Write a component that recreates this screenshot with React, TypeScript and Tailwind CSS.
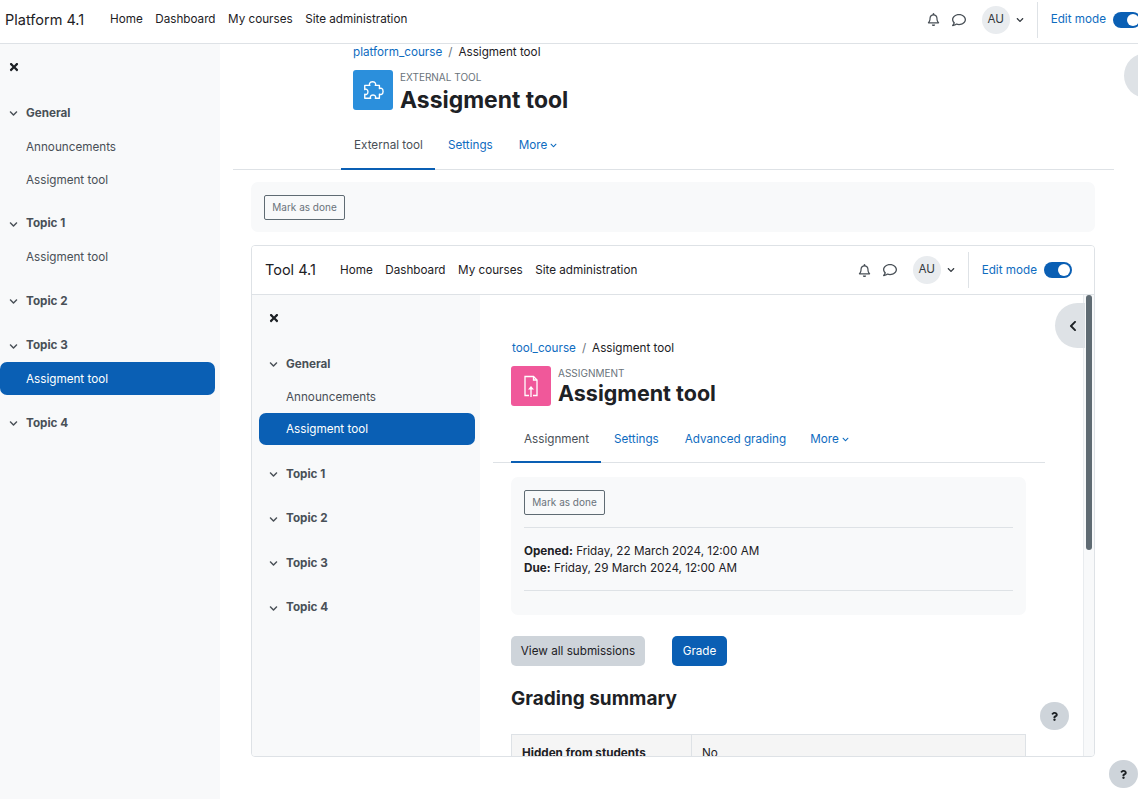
import { FaChevronDown, FaChevronLeft, FaQuestion, FaRegBell, FaRegComment, FaTimes } from 'react-icons/fa';

type Section = { title: string; items: string[] };

function TopBar({ brand, small }: { brand: string; small?: boolean }) {
  return (
    <header className={`flex items-center bg-white shrink-0 border-b border-[#dee2e6] ${small ? 'h-[49px] pl-[13px]' : 'h-[44px] pl-[5px] pb-[4px]'}`}>
      <span className={`text-[14.5px] text-[#1d2125] ${small ? 'w-[75px]' : 'w-[105px]'}`}>{brand}</span>
      <nav className="flex gap-[12.5px] mt-[1px] text-[11.7px] text-[#1d2125]">
        <span>Home</span>
        <span>Dashboard</span>
        <span>My courses</span>
        <span>Site administration</span>
      </nav>
      <div className={`ml-auto flex items-center h-full ${small ? 'pr-[22px]' : ''}`}>
        <FaRegBell size={13} className="text-[#495057]" />
        <FaRegComment size={14} className="ml-[12px] text-[#495057]" />
        <span className="ml-[16px] w-[28px] h-[28px] rounded-full bg-[#e9ecef] flex items-center justify-center text-[11.7px] text-[#343a40]">AU</span>
        <FaChevronDown size={8} className="ml-[6px] text-[#343a40]" />
        <span className="ml-[13px] w-px h-[36px] bg-[#dee2e6]" />
        <span className="ml-[13px] mt-[1px] text-[11.7px] text-[#0f6cbf]">Edit mode</span>
        <span className={`ml-[7px] h-[16px] w-[28px] shrink-0 rounded-full bg-[#0a5fb4] flex items-center justify-end pr-[2px] ${small ? '' : '-mr-[3px]'}`}>
          <span className="w-[12px] h-[12px] rounded-full bg-white" />
        </span>
      </div>
    </header>
  );
}

function CourseIndex({ sections, active, width, pad, itemPad, itemH, activeClass }: { sections: Section[]; active: [number, number]; width: string; pad: string; itemPad: string; itemH: string; activeClass: string }) {
  return (
    <aside className={`${width} shrink-0 bg-[#f8f9fa] h-full overflow-hidden`}>
      <div className={`h-[46px] mb-[6px] flex items-center ${pad}`}>
        <FaTimes size={12} className="text-[#1d2125]" />
      </div>
      <div className="flex flex-col gap-[10.5px]">
        {sections.map((s, i) => (
          <div key={s.title}>
            <div className={`h-[34px] pt-[1px] flex items-center font-bold text-[11.7px] text-[#495057] ${pad}`}>
              <FaChevronDown size={9} className="ml-[1px] mr-[8px]" />
              {s.title}
            </div>
            {s.items.map((item, j) =>
              active[0] === i && active[1] === j ? (
                <div key={item} className={`flex items-center rounded-[7px] bg-[#0a5fb4] text-white text-[11.7px] ${itemH} ${activeClass}`}>
                  {item}
                </div>
              ) : (
                <div key={item} className={`flex items-center pt-[2px] text-[11.7px] text-[#495057] ${itemH} ${itemPad}`}>
                  {item}
                </div>
              )
            )}
          </div>
        ))}
      </div>
    </aside>
  );
}

function PageHead({ course, kind, color, icon, titleClass, rowClass }: { course: string; kind: string; color: string; icon: React.ReactNode; titleClass: string; rowClass: string }) {
  return (
    <div>
      <div className="h-[16px] pt-[1px] flex items-center text-[11.7px] text-[#1d2125]">
        <span className="text-[#0f6cbf]">{course}</span>
        <span className="mx-[6px] text-[#6a737b]">/</span>
        <span>Assigment tool</span>
      </div>
      <div className={`mt-[10px] flex items-start ${rowClass}`}>
        <span className={`w-[40px] h-[40px] rounded-[3px] flex items-center justify-center text-white ${color}`}>{icon}</span>
        <div className="ml-[7px]">
          <div className="text-[10px] leading-[12px] mt-[1px] text-[#6a737b] uppercase">{kind}</div>
          <div className={`leading-[28px] font-bold text-[#1d2125] ${titleClass}`}>Assigment tool</div>
        </div>
      </div>
    </div>
  );
}

function MarkDone() {
  return (
    <button className="w-[81px] h-[25px] rounded-[2px] border border-[#5f6b73] text-[10px] text-[#6a737b] bg-[#f8f9fa]">Mark as done</button>
  );
}

function Help({ className }: { className: string }) {
  return (
    <span className={`absolute w-[29px] h-[28px] rounded-full bg-[#ced4da] flex items-center justify-center text-[#1d2125] ${className}`}>
      <FaQuestion size={9} />
    </span>
  );
}

function PuzzleIcon() {
  return (
    <svg width="22" height="22" viewBox="0 0 24 24" fill="none" stroke="currentColor" strokeWidth="1.5" strokeLinejoin="round">
      <path d="M3 7H8.5c-.8-1-.6-4 3-4s3.8 3 3 4H19v3.5c1-.8 4-.6 4 3s-3 3.800-4 3V21h-4.500c.8-1 .6-3.500-2.500-3.500S8.700 20 9.500 21H3v-4.500c1 .8 3.500.6 3.500-2.500S4 10.700 3 11.500Z" />
    </svg>
  );
}

function FileArrowIcon() {
  return (
    <svg width="24" height="24" viewBox="0 0 24 24" fill="none" stroke="currentColor" strokeWidth="1.3">
      <path d="M10 21.500H6V2.500h8.500L18 6v15.500h-4" />
      <path d="M14.500 2.500V6H18" />
      <path d="M12 23v-9" />
      <path d="M9 15.500l3-3.500 3 3.500Z" fill="currentColor" stroke="none" />
    </svg>
  );
}

const outer: Section[] = [
  { title: 'General', items: ['Announcements', 'Assigment tool'] },
  { title: 'Topic 1', items: ['Assigment tool'] },
  { title: 'Topic 2', items: [] },
  { title: 'Topic 3', items: ['Assigment tool'] },
  { title: 'Topic 4', items: [] },
];

const inner: Section[] = [
  { title: 'General', items: ['Announcements', 'Assigment tool'] },
  { title: 'Topic 1', items: [] },
  { title: 'Topic 2', items: [] },
  { title: 'Topic 3', items: [] },
  { title: 'Topic 4', items: [] },
];

export default function App() {
  return (
    <div className="h-[799px] w-[1138px] overflow-hidden flex flex-col bg-white relative font-['Inter',sans-serif]">
      <TopBar brand="Platform 4.1" />
      <div className="flex flex-1 min-h-0">
        <CourseIndex sections={outer} active={[3, 0]} width="w-[220px]" pad="pl-[8px]" itemPad="pl-[26px]" itemH="h-[33px]" activeClass="w-[215px] pl-[26px] pt-[4px] -mt-[1px] mb-[1px]" />
        <main className="flex-1 min-w-0 relative">
          <div className="pl-[133px]">
            <PageHead course="platform_course" kind="External tool" color="bg-[#2b8fdc]" icon={<PuzzleIcon />} titleClass="text-[22.9px] mt-[3px]" rowClass="" />
          </div>
          <div className="ml-[13px] mr-[24px] mt-[13px] h-[43px] border-b border-[#dee2e6] flex pl-[108px] text-[11.7px] text-[#0f6cbf]">
            <span className="w-[94px] h-[43px] pt-[10px] pl-[13px] text-[#495057] border-b-2 border-[#0a5fb4]">External tool</span>
            <span className="ml-[13px] pt-[10px]">Settings</span>
            <span className="ml-[26px] pt-[10px] flex items-start gap-[3px]">More<FaChevronDown size={7} className="mt-[5px]" /></span>
          </div>
          <div className="ml-[31px] mr-[43px] mt-[12px] h-[50px] rounded-[7px] bg-[#f8f9fa] px-[13px] flex items-center">
            <MarkDone />
          </div>
          <div className="ml-[31px] mr-[43px] mt-[13px] h-[512px] rounded-[4px] border border-[#dee2e6] flex flex-col overflow-hidden">
            <TopBar brand="Tool 4.1" small />
            <div className="flex flex-1 min-h-0">
              <CourseIndex sections={inner} active={[0, 1]} width="w-[228px]" pad="pl-[16px]" itemPad="pl-[34px]" itemH="h-[32px]" activeClass="ml-[7px] w-[216px] pl-[27px] pt-[2px] mb-[1.5px]" />
              <div className="flex-1 min-w-0 relative overflow-hidden">
                <div className="pl-[32px] pt-[45px]">
                  <PageHead course="tool_course" kind="Assignment" color="bg-[#f0589a]" icon={<FileArrowIcon />} titleClass="text-[21.5px]" rowClass="-ml-[1px]" />
                </div>
                <div className="ml-[13px] w-[552px] mt-[9px] h-[47px] border-b border-[#dee2e6] flex pl-[18px] text-[11.7px] text-[#0f6cbf]">
                  <span className="w-[90px] h-[47px] pt-[15px] pl-[13px] text-[#495057] border-b-2 border-[#0a5fb4]">Assignment</span>
                  <span className="ml-[13px] pt-[15px]">Settings</span>
                  <span className="ml-[26px] pt-[15px]">Advanced grading</span>
                  <span className="ml-[24px] pt-[15px] flex items-start gap-[3px]">More<FaChevronDown size={7} className="mt-[5px]" /></span>
                </div>
                <div className="ml-[31px] w-[515px] mt-[14px] h-[138px] rounded-[7px] bg-[#f8f9fa] px-[13px] pt-[11px]">
                  <MarkDone />
                  <div className="mt-[12px] border-t border-[#dee2e6] pt-[15px] h-[63px] text-[11.7px] leading-[17px] text-[#1d2125]">
                    <div><b className="font-bold">Opened:</b> Friday, 22 March 2024, 12:00 AM</div>
                    <div><b className="font-bold">Due:</b> Friday, 29 March 2024, 12:00 AM</div>
                  </div>
                  <div className="border-t border-[#dee2e6]" />
                </div>
                <div className="ml-[31px] mt-[21px] flex gap-[27px] text-[11.7px]">
                  <button className="w-[134px] h-[30px] pt-[1px] rounded-[5px] bg-[#ced4da] text-[#1d2125]">View all submissions</button>
                  <button className="w-[55px] h-[30px] pt-[1px] rounded-[5px] bg-[#0a5fb4] text-white">Grade</button>
                </div>
                <h3 className="ml-[31px] mt-[20px] text-[19px] leading-[26px] font-bold text-[#1d2125]">Grading summary</h3>
                <div className="ml-[31px] mt-[22px] w-[515px] h-[60px] border border-[#dee2e6] bg-[#f5f5f5] flex text-[11.7px] text-[#1d2125]">
                  <div className="w-[180px] border-r border-[#dee2e6] pl-[10px] pt-[10px] font-bold">Hidden from students</div>
                  <div className="pl-[10px] pt-[10px]">No</div>
                </div>
                <span className="absolute right-0 top-0 bottom-0 w-[11px] border-l border-[#e9ecef] bg-[#f8f9fa]">
                  <span className="block ml-[2px] w-[6px] h-[255px] rounded-full bg-[#5f6b73]" />
                </span>
                <span className="absolute right-[9px] top-[8px] w-[30px] h-[45px] rounded-l-full bg-[#dee2e6] flex items-center pl-[12px] text-[#1d2125]">
                  <FaChevronLeft size={12} />
                </span>
                <Help className="left-[560px] top-[407px]" />
              </div>
            </div>
          </div>
          <span className="absolute -right-[16px] top-[9px] w-[30px] h-[45px] rounded-l-full bg-[#dee2e6] flex items-center pl-[12px] text-[#1d2125]">
            <FaChevronLeft size={12} />
          </span>
        </main>
      </div>
      <Help className="left-[1109px] top-[760px]" />
    </div>
  );
}
